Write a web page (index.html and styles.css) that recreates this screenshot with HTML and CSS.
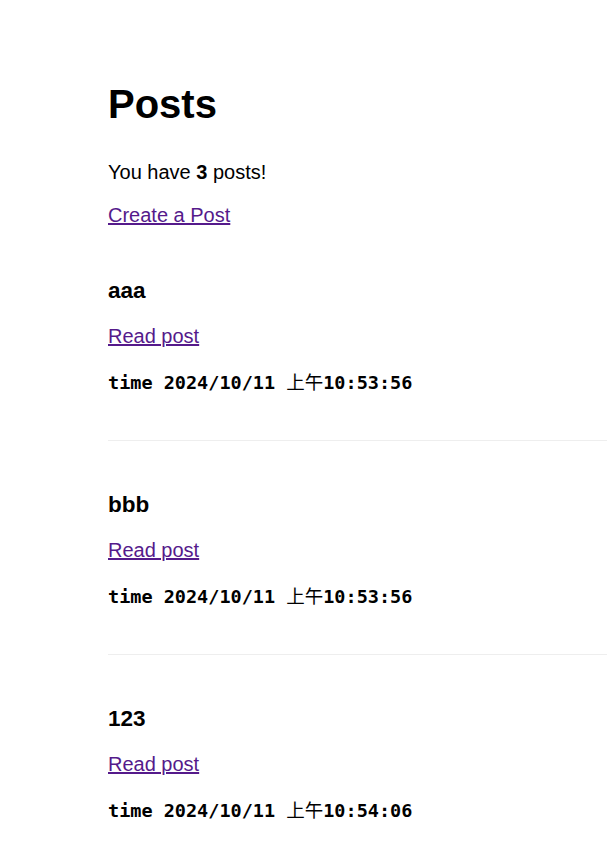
FILE: index.html
```html
<!DOCTYPE html>
<html>
<head>
<meta charset="utf-8">
<link rel="stylesheet" href="styles.css">
</head>
<body>
<main class="page">
  <h1 class="title">Posts</h1>
  <p class="count">You have <strong>3</strong> posts!</p>
  <a class="link create" href="#">Create a Post</a>
  <section class="posts">
    <article class="post">
      <h2 class="post-title">aaa</h2>
      <a class="link read" href="#">Read post</a>
      <p class="time">time 2024/10/11 <span class="cjk">上午</span>10:53:56</p>
    </article>
    <hr class="divider">
    <article class="post">
      <h2 class="post-title">bbb</h2>
      <a class="link read" href="#">Read post</a>
      <p class="time">time 2024/10/11 <span class="cjk">上午</span>10:53:56</p>
    </article>
    <hr class="divider">
    <article class="post">
      <h2 class="post-title">123</h2>
      <a class="link read" href="#">Read post</a>
      <p class="time">time 2024/10/11 <span class="cjk">上午</span>10:54:06</p>
    </article>
  </section>
</main>
</body>
</html>
```

FILE: styles.css
```css
html, body {
  margin: 0;
  background: #fff;
}
body {
  font-family: "Liberation Sans", Arial, sans-serif;
  color: #000;
}
.page {
  display: flex;
  flex-direction: column;
  align-items: flex-start;
  padding: 80px 0 0 108px;
}
.title {
  margin: 0;
  font-size: 40px;
  line-height: 48px;
  font-weight: 700;
}
.count {
  margin: 32px 0 0;
  font-size: 20px;
  line-height: 24px;
}
.link {
  display: block;
  color: #551a8b;
  font-size: 20px;
  line-height: 24px;
  text-decoration: underline;
}
.create {
  margin-top: 19px;
}
.posts {
  align-self: stretch;
  margin-top: 51px;
  display: flex;
  flex-direction: column;
}
.post {
  display: flex;
  flex-direction: column;
  align-items: flex-start;
}
.post-title {
  margin: 0;
  font-size: 22.5px;
  line-height: 26px;
  font-weight: 700;
}
.read {
  margin-top: 20px;
}
.time {
  margin: 24px 0 0;
  height: 22px;
  font-family: "DejaVu Sans Mono", "Noto Sans CJK SC", monospace;
  font-weight: 700;
  font-size: 18.5px;
  line-height: 22px;
}
.cjk {
  font-family: "Noto Sans CJK SC", sans-serif;
  font-weight: 400;
  line-height: 1;
}
.divider {
  margin: 46px 0 51px;
  border: 0;
  border-top: 1px solid #eee;
  height: 0;
}
```
